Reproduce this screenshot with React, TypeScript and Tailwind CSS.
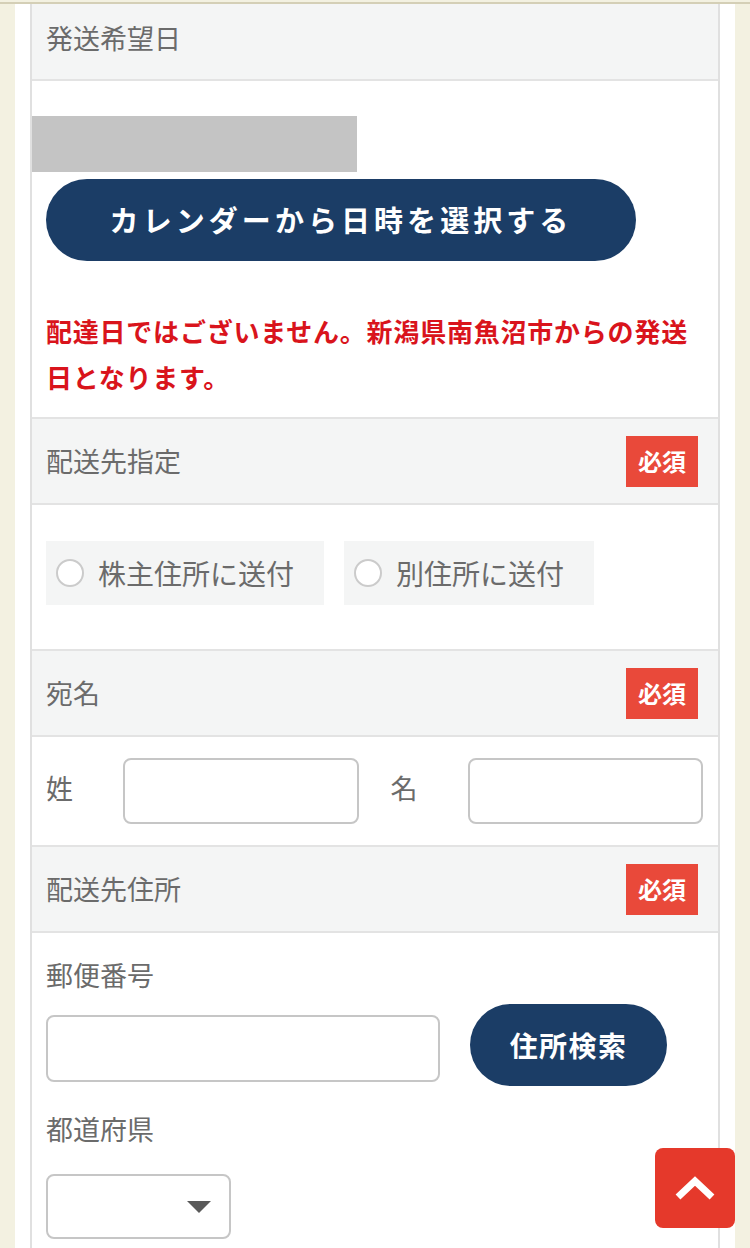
import { useState } from 'react'

const font = { fontFamily: '"Noto Sans CJK JP", "Noto Sans", sans-serif' }

function Required() {
  return (
    <span className="flex h-[51px] w-[72px] items-center justify-center bg-[#e9493a] text-[24px] font-bold text-white">
      必須
    </span>
  )
}

function SectionHeader({ title, required }: { title: string; required?: boolean }) {
  return (
    <div className="flex h-[86px] items-center justify-between border-b-2 border-[#e3e3e3] bg-[#f4f5f5] pl-[14px] pr-[20px]">
      <span className="text-[27px] text-[#6b6b6b]">{title}</span>
      {required && <Required />}
    </div>
  )
}

function Radio({ label, checked, onClick }: { label: string; checked: boolean; onClick: () => void }) {
  return (
    <button
      type="button"
      onClick={onClick}
      className="flex h-[64px] items-center gap-[14px] bg-[#f4f5f5] pl-[10px] pr-[30px]"
    >
      <span className="flex h-[28px] w-[28px] items-center justify-center rounded-full border-2 border-[#cbcbcb] bg-white">
        {checked && <span className="h-[12px] w-[12px] rounded-full bg-[#1b3d66]" />}
      </span>
      <span className="text-[28px] text-[#6b6b6b]">{label}</span>
    </button>
  )
}

export default function App() {
  const [dest, setDest] = useState<string | null>(null)

  return (
    <div className="min-h-screen bg-[#f3f1e1] pt-[2px]" style={font}>
      <div className="border-t-2 border-[#d4cfb6] px-[15px]">
        <div className="min-h-[1300px] bg-white px-[15px]">
          <div className="border-x-2 border-[#e0e0e0]">
            {/* 発送希望日 */}
            <div className="flex h-[77px] items-center border-b-2 border-[#e3e3e3] bg-[#f4f5f5] pb-[6px] pl-[14px]">
              <span className="text-[27px] text-[#6b6b6b]">発送希望日</span>
            </div>
            <div className="border-b-2 border-[#e3e3e3] pb-[17px] pt-[35px]">
              <div className="h-[56px] w-[325px] bg-[#c4c4c4]" />
              <div className="px-[14px]">
                <button
                  type="button"
                  className="mt-[7px] flex h-[82px] w-[590px] items-center justify-center rounded-full bg-[#1b3d66] text-[29px] font-bold tracking-[0.14em] text-white"
                >
                  カレンダーから日時を選択する
                </button>
                <p className="mt-[47px] text-[26px] font-bold leading-[46px] tracking-[0.03em] text-[#d9141c]">
                  配達日ではございません。新潟県南魚沼市からの発送日となります。
                </p>
              </div>
            </div>

            {/* 配送先指定 */}
            <SectionHeader title="配送先指定" required />
            <div className="flex gap-[20px] border-b-2 border-[#e3e3e3] px-[14px] pb-[44px] pt-[36px]">
              <Radio label="株主住所に送付" checked={dest === 'a'} onClick={() => setDest('a')} />
              <Radio label="別住所に送付" checked={dest === 'b'} onClick={() => setDest('b')} />
            </div>

            {/* 宛名 */}
            <SectionHeader title="宛名" required />
            <div className="flex items-center gap-[32px] border-b-2 border-[#e3e3e3] pb-[21px] pl-[14px] pr-[15px] pt-[21px]">
              <div className="flex flex-1 items-center">
                <span className="w-[77px] pb-[6px] text-[27px] text-[#6b6b6b]">姓</span>
                <input className="h-[66px] flex-1 rounded-[8px] border-2 border-[#c6c6c6] bg-white px-3 outline-none" />
              </div>
              <div className="flex flex-1 items-center">
                <span className="w-[77px] pb-[6px] text-[27px] text-[#6b6b6b]">名</span>
                <input className="h-[66px] flex-1 rounded-[8px] border-2 border-[#c6c6c6] bg-white px-3 outline-none" />
              </div>
            </div>

            {/* 配送先住所 */}
            <SectionHeader title="配送先住所" required />
            <div className="px-[14px] pb-[60px] pt-[22px]">
              <div className="text-[27px] leading-[40px] text-[#6b6b6b]">郵便番号</div>
              <div className="mt-[9px] flex items-start gap-[30px]">
                <input className="mt-[11px] h-[67px] w-[394px] rounded-[8px] border-2 border-[#c6c6c6] bg-white px-3 outline-none" />
                <button
                  type="button"
                  className="flex h-[82px] w-[197px] items-center justify-center rounded-full bg-[#1b3d66] text-[28px] font-bold tracking-[0.05em] text-white"
                >
                  住所検索
                </button>
              </div>
              <div className="mt-[23px] text-[27px] leading-[40px] text-[#6b6b6b]">都道府県</div>
              <div className="mt-[25px] flex h-[65px] w-[185px] items-center justify-end rounded-[8px] border-2 border-[#c6c6c6] bg-white pr-[18px]">
                <svg width="24" height="12" viewBox="0 0 24 12">
                  <polygon points="0,0 24,0 12,12" fill="#5a5a5a" />
                </svg>
              </div>
            </div>
          </div>
        </div>
      </div>

      <button
        type="button"
        className="fixed bottom-[20px] right-[15px] flex h-[80px] w-[80px] items-center justify-center rounded-[8px] bg-[#e5392b]"
      >
        <svg width="44" height="26" viewBox="0 0 44 26">
          <polyline points="5,22 22,6 39,22" fill="none" stroke="white" strokeWidth="7" />
        </svg>
      </button>
    </div>
  )
}
